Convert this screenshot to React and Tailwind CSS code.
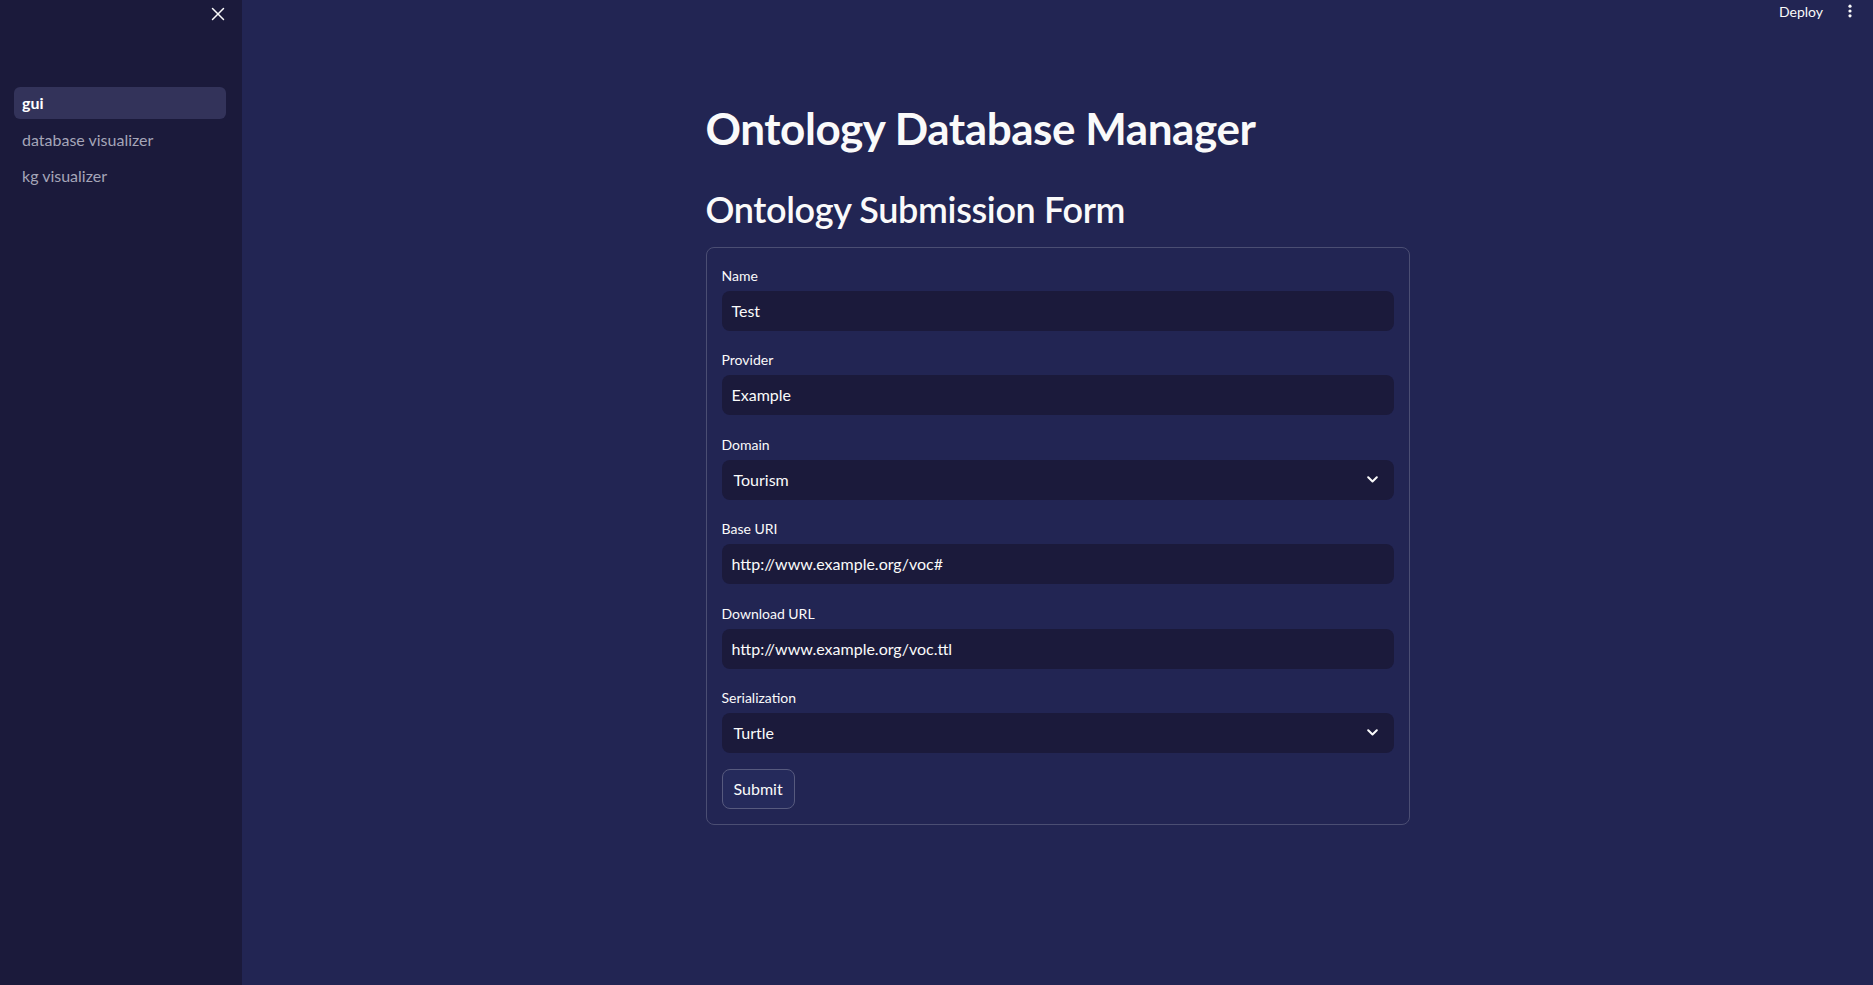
import { X } from "lucide-react";

const font = { fontFamily: '"Lato", "Noto Sans", sans-serif' };

export default function App() {
  return (
    <div className="flex h-screen w-full bg-[#222553] text-[#fafafa] overflow-hidden" style={font}>
      {/* Sidebar */}
      <aside className="w-[242px] shrink-0 bg-[#1b1a3b] flex flex-col">
        <div className="h-[26px] flex items-center justify-end pr-[13px] pt-[1px]">
          <X size={22} strokeWidth={1.6} className="text-[#fafafa]" />
        </div>
        <nav className="mt-[61px] pl-[14px] pr-[16px] flex flex-col gap-[4.5px]">
          <NavItem label="gui" active />
          <NavItem label="database visualizer" />
          <NavItem label="kg visualizer" />
        </nav>
      </aside>

      {/* Main */}
      <main className="flex-1 flex flex-col">
        <header className="h-[22px] flex items-center justify-end gap-[24px] pr-[20px]">
          <span className="text-[14px] text-[#fafafa]">Deploy</span>
          <svg width="6" height="14" viewBox="0 0 6 14" fill="#fafafa">
            <circle cx="3" cy="2.2" r="1.6" />
            <circle cx="3" cy="7" r="1.6" />
            <circle cx="3" cy="11.8" r="1.6" />
          </svg>
        </header>

        <div className="w-[704px] mx-auto pt-[80px]">
          <h1 className="text-[44px] font-bold leading-[1.2] tracking-[-0.01em]">Ontology Database Manager</h1>
          <h2 className="mt-[33px] text-[36px] font-semibold leading-[1.2] tracking-[-0.01em]">Ontology Submission Form</h2>

          <form className="mt-[16px] border border-[#4b4e73] rounded-lg p-[15px] flex flex-col gap-[16.4px]">
            <TextField label="Name" value="Test" />
            <TextField label="Provider" value="Example" />
            <SelectField label="Domain" value="Tourism" />
            <TextField label="Base URI" value="http://www.example.org/voc#" />
            <TextField label="Download URL" value="http://www.example.org/voc.ttl" />
            <SelectField label="Serialization" value="Turtle" />
            <div>
              <button
                type="button"
                className="h-[40px] px-[11px] rounded-lg border border-[#575a7e] bg-[#252a5b] text-[16px] text-[#fafafa]"
              >
                Submit
              </button>
            </div>
          </form>
        </div>
      </main>
    </div>
  );
}

function NavItem({ label, active = false }) {
  return (
    <div
      className={`h-[32px] flex items-center px-[8px] rounded-md text-[16px] ${
        active ? "bg-[#33335a] text-white font-bold" : "text-[#a5a5b8]"
      }`}
    >
      {label}
    </div>
  );
}

function Label({ children }) {
  return <div className="h-7 pt-[1px] text-[14px] leading-6 text-[#fafafa]">{children}</div>;
}

function TextField({ label, value }) {
  return (
    <div>
      <Label>{label}</Label>
      <div className="h-[40px] bg-[#1b1a3b] rounded-lg flex items-center px-[10px] text-[16px]">
        {value}
      </div>
    </div>
  );
}

function SelectField({ label, value }) {
  return (
    <div>
      <Label>{label}</Label>
      <div className="h-[40px] bg-[#1b1a3b] rounded-lg flex items-center justify-between pl-[12px] pr-[16px] text-[16px]">
        <span>{value}</span>
        <svg width="11" height="7" viewBox="0 0 11 7" fill="none" stroke="#fafafa" strokeWidth="2" strokeLinecap="round" strokeLinejoin="round">
          <path d="M1.2 1.2 5.5 5.5 9.8 1.2" />
        </svg>
      </div>
    </div>
  );
}
